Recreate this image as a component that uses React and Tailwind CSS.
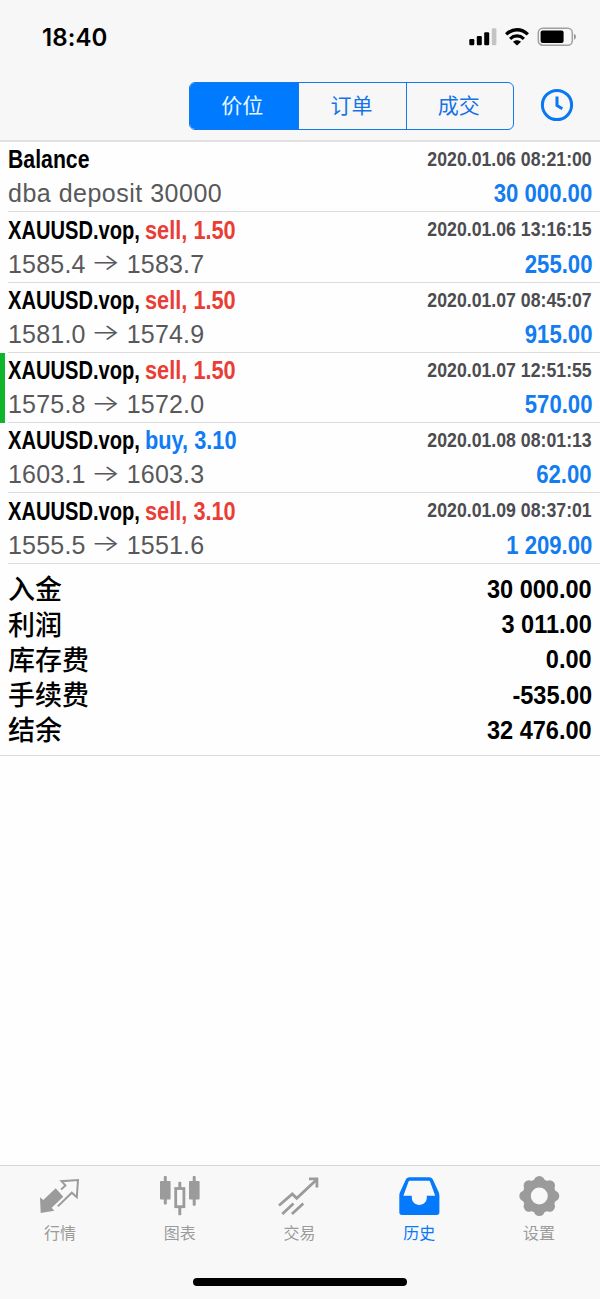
const deals = [
  { title: 'Balance', date: '2020.01.06 08:21:00', note: 'dba deposit 30000', profit: '30 000.00' },
  { title: 'XAUUSD.vop,', side: 'sell', volume: '1.50', date: '2020.01.06 13:16:15', open: '1585.4', close: '1583.7', profit: '255.00' },
  { title: 'XAUUSD.vop,', side: 'sell', volume: '1.50', date: '2020.01.07 08:45:07', open: '1581.0', close: '1574.9', profit: '915.00' },
  { title: 'XAUUSD.vop,', side: 'sell', volume: '1.50', date: '2020.01.07 12:51:55', open: '1575.8', close: '1572.0', profit: '570.00', marked: true },
  { title: 'XAUUSD.vop,', side: 'buy', volume: '3.10', date: '2020.01.08 08:01:13', open: '1603.1', close: '1603.3', profit: '62.00' },
  { title: 'XAUUSD.vop,', side: 'sell', volume: '3.10', date: '2020.01.09 08:37:01', open: '1555.5', close: '1551.6', profit: '1 209.00' },
];

const totals = [
  { label: '入金', value: '30 000.00' },
  { label: '利润', value: '3 011.00' },
  { label: '库存费', value: '0.00' },
  { label: '手续费', value: '-535.00' },
  { label: '结余', value: '32 476.00' },
];

const segments = ['价位', '订单', '成交'];

const QuotesIcon = () => (
  <svg viewBox="0 0 44 44" className="size-11">
    <path d="M2 23.3 5.3 26 17.7 14.3 25.3 22.7 13.7 33.7 16.3 36.7 2.7 39Z" fill="currentColor" />
    <path d="M19.8 32.4 33.8 18.7 38.8 23.2 40 6 23.5 7.2 27.4 11.4 23 15.6" fill="none" stroke="currentColor" strokeWidth="2" />
  </svg>
);

const ChartIcon = () => (
  <svg viewBox="0 0 44 44" className="size-11">
    <g fill="currentColor">
      <rect x="2" y="7" width="10.6" height="18.5" rx="1" />
      <rect x="5.8" y="2" width="3" height="28.5" rx="1" />
      <rect x="31" y="7" width="10.6" height="18.5" rx="1" />
      <rect x="34.7" y="2" width="3" height="29.8" rx="1" />
      <rect x="20.3" y="7.7" width="3" height="6" rx="1" />
      <rect x="20.3" y="33" width="3" height="8.3" rx="1" />
    </g>
    <rect x="17.7" y="14.5" width="8.2" height="18.2" fill="none" stroke="currentColor" strokeWidth="2.8" />
  </svg>
);

const TradeIcon = () => (
  <svg viewBox="0 0 44 44" className="size-11" fill="none" stroke="currentColor" strokeWidth="2.8">
    <path d="M2 31.5 15.3 20 19.7 24.3 39 6.2" />
    <path d="M32 4.9H39.9V13.5" />
    <path d="M5.3 40 16.5 29.5M14.9 40 26.3 29.5" />
  </svg>
);

const HistoryIcon = () => (
  <svg viewBox="0 0 44 44" className="size-11">
    <path
      fillRule="evenodd"
      fill="currentColor"
      d="M12.5 3.3H32.2C34 3.3 35.3 4.2 36 5.8L41.4 17.5C42.1 19 42.4 20.2 42.4 22V38.3C42.4 40 41.4 41 39.7 41H5C3.3 41 2.3 40 2.3 38.3V22C2.3 20.2 2.6 19 3.3 17.5L8.7 5.8C9.4 4.2 10.7 3.3 12.5 3.3ZM13 6.7C12.2 6.7 11.8 7 11.5 7.7L6.4 21.8H14.8V23.6C14.8 28 18 31 22.3 31S29.8 28 29.8 23.6V21.8H38.2L33.1 7.7C32.8 7 32.4 6.7 31.6 6.7Z"
    />
  </svg>
);

const SettingsIcon = () => (
  <svg viewBox="0 0 44 44" className="size-11">
    <circle cx="22.3" cy="22" r="12.7" fill="none" stroke="currentColor" strokeWidth="8.4" />
    {[0, 45, 90, 135, 180, 225, 270, 315].map((angle) => (
      <circle key={angle} cx="22.3" cy="7.4" r="5.4" transform={`rotate(${angle} 22.3 22)`} fill="currentColor" />
    ))}
  </svg>
);

const tabs = [
  { label: '行情', icon: QuotesIcon },
  { label: '图表', icon: ChartIcon },
  { label: '交易', icon: TradeIcon },
  { label: '历史', icon: HistoryIcon, active: true },
  { label: '设置', icon: SettingsIcon },
];

const StatusBar = () => (
  <div className="flex h-[74px] items-center justify-between pl-[42px] pr-[23px]">
    <span className="pt-0.5 font-['Inter',sans-serif] text-[24px] font-semibold leading-none tracking-[0.1px] text-black">18:40</span>
    <div className="flex items-center gap-[7px]">
      <svg viewBox="0 0 28 18" className="h-[18px] w-7">
        <rect x="0.3" y="11" width="5" height="6.3" rx="1.2" />
        <rect x="7.8" y="8" width="5" height="9.3" rx="1.2" />
        <rect x="15.2" y="4.3" width="5" height="13" rx="1.2" />
        <rect x="22.8" y="0.3" width="4.6" height="17" rx="1.2" fill="#c4c4c4" />
      </svg>
      <svg viewBox="0 0 26 18" className="h-[18px] w-[26px]">
        <path d="M2.2 6.4C8.5 0.2 17.5 0.2 23.8 6.4" fill="none" stroke="#000" strokeWidth="3.4" />
        <path d="M6.1 10.8C10.2 7 15.8 7 19.9 10.8" fill="none" stroke="#000" strokeWidth="3.2" />
        <path d="M9 13.7C11.3 11.7 14.7 11.7 17 13.7L13 17.6Z" />
      </svg>
      <svg viewBox="0 0 40 20" className="h-5 w-10">
        <rect x="1.3" y="1.2" width="34" height="17" rx="4.5" fill="none" stroke="#a0a0a0" strokeWidth="1.5" />
        <rect x="3.6" y="3.4" width="23" height="12.6" rx="2" />
        <path d="M37 6.8C39.6 7.6 39.6 12 37 12.8Z" fill="#999" />
      </svg>
    </div>
  </div>
);

const Header = () => (
  <header className="flex h-[142px] flex-col border-b-2 border-[#e2e1e2] bg-[#f7f7f7]">
    <StatusBar />
    <div className="flex items-start justify-end pr-[26px] pt-2">
      <div className="flex h-12 w-[325px] overflow-hidden rounded-md border border-[#1478ea]">
        {segments.map((name, i) => (
          <button
            key={name}
            className={
              i === 0
                ? 'flex-1 bg-[#007aff] pb-0.5 pr-1 text-[21px] text-[#e6f7ff]'
                : 'flex-1 border-l border-[#1478ea] pb-0.5 pr-0.5 text-[21px] text-[#1673e6]'
            }
          >
            {name}
          </button>
        ))}
      </div>
      <svg viewBox="0 0 34 34" className="ml-[26px] mt-1.5 size-[34px]" fill="none" stroke="#0a78f0">
        <circle cx="17" cy="17" r="14.6" strokeWidth="3" />
        <path d="M17 8.5V17.5L22.3 20.8" strokeWidth="3" />
      </svg>
    </div>
  </header>
);

const DealRow = ({ deal }) => (
  <div className={deal.marked ? 'flex h-[70.3px] border-l-[5px] border-[#0fb52b] pl-[3px]' : 'flex h-[70.3px] pl-2'}>
    <div className="flex flex-1 flex-col border-b border-[#dcdcdc] pr-2">
      <div className="flex h-[35px] items-center justify-between font-['Liberation_Sans',sans-serif] font-bold">
        <div className="flex pt-px text-[25px]">
          {deal.side ? (
            <>
              <span className="w-[137px] origin-left scale-x-[0.805] whitespace-nowrap text-black">{deal.title}</span>
              <span
                className={
                  deal.side === 'sell'
                    ? 'origin-left scale-x-[0.87] whitespace-nowrap text-[#ea3d35]'
                    : 'origin-left scale-x-[0.87] whitespace-nowrap text-[#0f7cf5]'
                }
              >
                {deal.side}, {deal.volume}
              </span>
            </>
          ) : (
            <span className="origin-left scale-x-[0.85] text-black">{deal.title}</span>
          )}
        </div>
        <span className="origin-right scale-x-[0.885] pb-px text-[20px] text-[#4c4c50]">{deal.date}</span>
      </div>
      <div className="flex h-[34px] items-center justify-between font-['Liberation_Sans',sans-serif] text-[25px]">
        {deal.note ? (
          <span className="tracking-[0.5px] text-[#58585b]">{deal.note}</span>
        ) : (
          <span className="flex items-center tracking-[0.2px] text-[#58585b]">
            {deal.open}
            <span className="ml-[7px] mr-[9px] w-[25px] scale-x-[1.35] pb-1 text-center font-['Inter',sans-serif] text-[23px] font-light tracking-normal">→</span>
            {deal.close}
          </span>
        )}
        <span className="origin-right scale-x-[0.885] font-bold text-[#127cf0]">{deal.profit}</span>
      </div>
    </div>
  </div>
);

const Totals = () => (
  <div className="border-b border-[#d9d9d9] px-2 pb-[7px] pt-[8px]">
    {totals.map((row) => (
      <div key={row.label} className="flex h-[35.25px] items-center justify-between text-black">
        <span className="pb-[3px] text-[27px] font-medium leading-none">{row.label}</span>
        <span className="origin-right scale-x-[0.905] font-['Liberation_Sans',sans-serif] text-[26px] font-bold">{row.value}</span>
      </div>
    ))}
  </div>
);

const TabBar = () => (
  <footer className="flex h-[134px] flex-col items-center border-t border-[#d6d6d6] bg-[#f8f8f8]">
    <nav className="flex w-full pr-px pt-2">
      {tabs.map(({ label, icon: Icon, active }) => (
        <a
          key={label}
          className={active ? 'flex flex-1 flex-col items-center text-[#0579fb]' : 'flex flex-1 flex-col items-center text-[#9b9b9b]'}
        >
          <Icon />
          <span className="mt-0.5 text-[16px] leading-6">{label}</span>
        </a>
      ))}
    </nav>
    <div className="mt-[34px] h-2 w-[214px] rounded-full bg-black" />
  </footer>
);

const App = () => (
  <div className="flex h-[1299px] w-[600px] flex-col bg-[#fefefe] font-['Noto_Sans_CJK_SC',sans-serif]">
    <Header />
    <main className="flex-1">
      {deals.map((deal) => (
        <DealRow key={deal.date} deal={deal} />
      ))}
      <Totals />
    </main>
    <TabBar />
  </div>
);

export default App;
